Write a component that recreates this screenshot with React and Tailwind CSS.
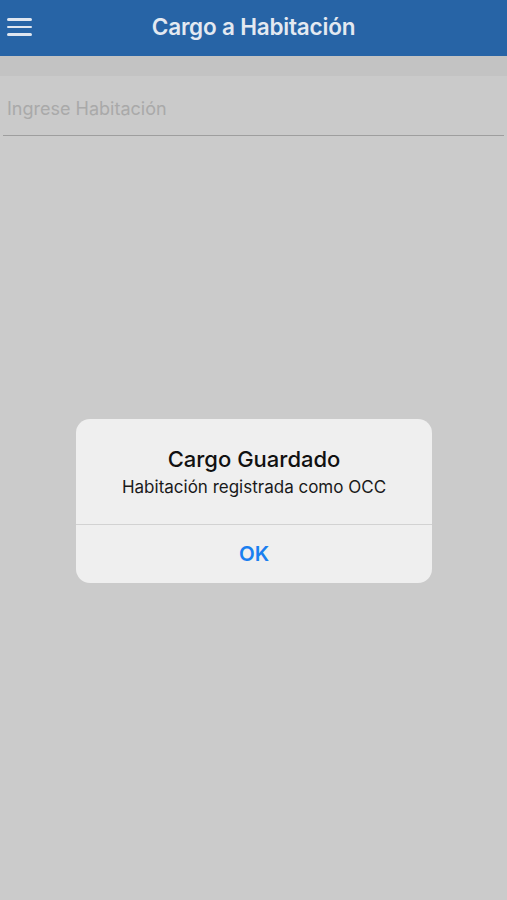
export default function App() {
  const font = { fontFamily: '"Inter", "Liberation Sans", sans-serif' };
  return (
    <div className="relative w-[507px] h-[900px] bg-[#cbcbcb] overflow-hidden" style={font}>
      <div className="h-[56px] bg-[#2764a6] flex items-center relative">
        <div className="absolute left-[7px] top-[18px] flex flex-col gap-[5px]">
          <div className="w-[25px] h-[2.5px] bg-[#dfe6f0] rounded-sm" />
          <div className="w-[25px] h-[2.5px] bg-[#dfe6f0] rounded-sm" />
          <div className="w-[25px] h-[2.5px] bg-[#dfe6f0] rounded-sm" />
        </div>
        <div className="w-full text-center text-[22.5px] font-semibold text-[#e3e9f1] tracking-[-0.2px] pb-[2px]">
          Cargo a Habitación
        </div>
      </div>
      <div className="h-[20px] bg-[#c3c3c3]" />
      <div className="h-[60px] bg-[#cacaca] flex flex-col">
        <div className="flex-1 flex items-center pl-[7px] pt-[6px] text-[18px] text-[#a9a9a9]">
          Ingrese Habitación
        </div>
        <div className="mx-[3px] h-px bg-[#9e9e9e]" />
      </div>

      <div className="absolute left-[76px] top-[419px] w-[356px] h-[164px] bg-[#efefef] rounded-[14px] flex flex-col overflow-hidden">
        <div className="h-[105px] flex flex-col items-center pt-[27px]">
          <div className="text-[22px] font-medium text-[#111] leading-[26px]">Cargo Guardado</div>
          <div className="text-[17px] text-[#1a1a1a] mt-[4px] leading-[22px]">Habitación registrada como OCC</div>
        </div>
        <div className="h-px bg-[#d2d2d2]" />
        <div className="flex-1 flex items-center justify-center text-[20.5px] font-semibold text-[#1a7ff0]">
          OK
        </div>
      </div>
    </div>
  );
}
